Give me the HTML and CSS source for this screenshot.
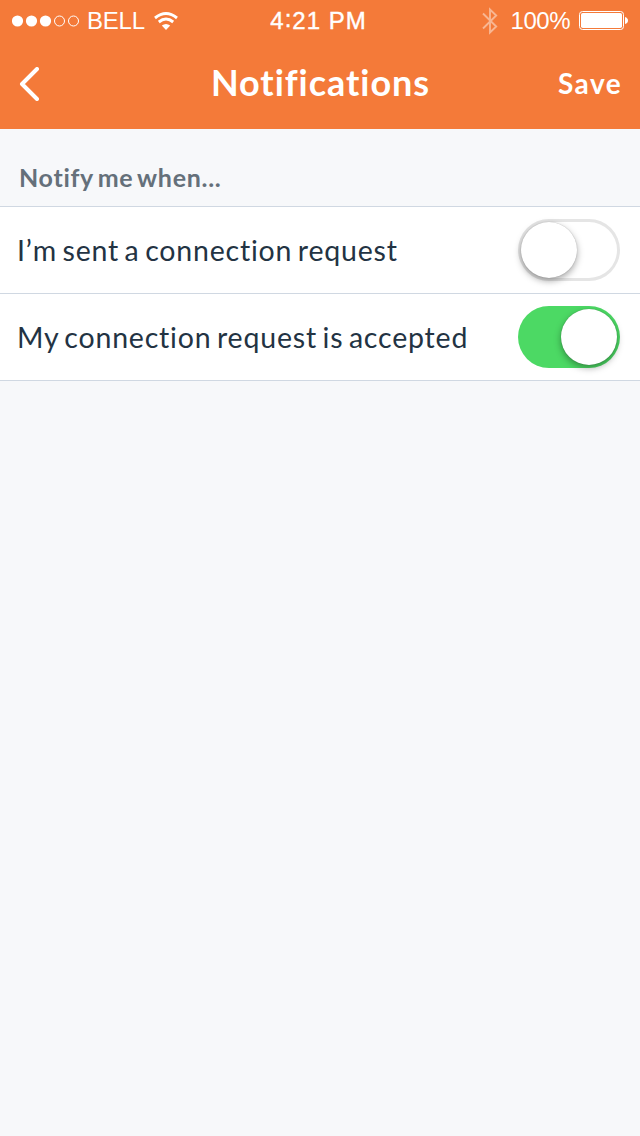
FILE: index.html
```html
<!DOCTYPE html>
<html lang="en">
<head>
<meta charset="utf-8">
<title>Notifications</title>
<link rel="stylesheet" href="styles.css">
</head>
<body>
<header class="header">
  <div class="status">
    <div class="status-left">
      <svg class="signal" width="68" height="12" viewBox="0 0 68 12"><g fill="#fff"><circle cx="5.5" cy="6" r="5.6"/><circle cx="19.5" cy="6" r="5.6"/><circle cx="33.5" cy="6" r="5.6"/></g><g fill="none" stroke="#fff"><circle cx="47.5" cy="6" r="5"/><circle cx="61.5" cy="6" r="5"/></g></svg>
      <span class="carrier">BELL</span>
      <svg class="wifi" width="24" height="18" viewBox="0 0 24 18"><g fill="none" stroke="#fff" stroke-width="2.9"><path d="M1 6Q12-2.8 23 6"/><path d="M4.8 10Q12 4.2 19.2 10"/></g><path d="M12 18L7.8 13.6Q12 10.2 16.2 13.6Z" fill="#fff"/></svg>
    </div>
    <span class="clock">4<span class="colon">:</span>21 PM</span>
    <div class="status-right">
      <svg class="bluetooth" width="16" height="28" viewBox="0 0 16 28"><path d="M1 6.5L14.2 19.5L8 25.5V2.5L14.2 8.5L1 21.5" fill="none" stroke="#fff" stroke-width="1.9"/></svg>
      <span class="percent">100%</span>
      <svg class="battery" width="49" height="19" viewBox="0 0 49 19"><rect x=".5" y=".5" width="44" height="18" rx="3" fill="none" stroke="#fff"/><rect x="2" y="2" width="41" height="15" rx="1.8" fill="#fff"/><path d="M46 6Q49 7 49 9.5T46 13Z" fill="#fff"/></svg>
    </div>
  </div>
  <nav class="navbar">
    <svg class="back" width="20" height="34" viewBox="0 0 20 34"><path d="M18 2L3 17L18 32" fill="none" stroke="#fff" stroke-width="4" stroke-linecap="round" stroke-linejoin="round"/></svg>
    <h1 class="title">Notifications</h1>
    <span class="save">Save</span>
  </nav>
</header>
<main>
  <h2 class="section">Notify me when...</h2>
  <div class="row"><span class="label label-sent">I’m sent a connection request</span><span class="toggle"><span class="knob"></span></span></div>
  <div class="row"><span class="label label-accepted">My connection request is accepted</span><span class="toggle on"><span class="knob"></span></span></div>
</main>
</body>
</html>
```
FILE: styles.css
```css
* { box-sizing: border-box; }
body { margin: 0; height: 1136px; background: #f7f8fa; color: #233343; font-family: Lato, sans-serif; font-variant-ligatures: none; overflow: hidden; }
svg { display: block; flex: none; }
span, h1, h2 { white-space: nowrap; }
.header { height: 129px; background: #f47a39; color: #fff; }
.status { display: grid; grid-template-columns: 1fr auto 1fr; align-items: center; height: 41px; padding: 0 12px; font: 24px/40px "Liberation Sans", sans-serif; font-variant-ligatures: none; }
.status-left, .status-right { display: flex; align-items: center; }
.status-right { justify-content: flex-end; }
.carrier { margin-left: 7px; letter-spacing: -.2px; }
.wifi { margin-left: 9px; }
.bluetooth { margin-right: 13px; opacity: .45; }
.percent { margin-right: 9px; letter-spacing: -.5px; }
.clock { padding-right: 3px; letter-spacing: 1px; -webkit-text-stroke: .4px #fff; }
.colon { vertical-align: 2px; line-height: 1; }
.navbar { display: grid; grid-template-columns: 1fr auto 1fr; align-items: center; height: 84px; padding: 0 18px 0 19px; }
.title { margin: -2px 0 0; font-size: 36px; line-height: 84px; font-weight: 700; letter-spacing: .95px; }
.save { justify-self: end; font-size: 28px; font-weight: 700; letter-spacing: 1.4px; }
.back { margin-top: 2px; }
.section { margin: 0; height: 78px; padding: 29px 19px 0; border-bottom: 1px solid #d0d8e2; color: #65707a; font-size: 25px; line-height: 38px; font-weight: 700; letter-spacing: .7px; word-spacing: -2.5px; }
.row { display: flex; align-items: center; justify-content: space-between; height: 87px; padding: 0 20px 0 17px; border-bottom: 1px solid #d0d8e2; background: #fff; }
.label { font-size: 28.5px; letter-spacing: .8px; word-spacing: -2.5px; }
.toggle { display: flex; width: 102px; height: 62px; padding: 3px; border-radius: 31px; box-shadow: inset 0 0 0 3px #e5e5e5; }
.knob { width: 56px; height: 56px; border-radius: 50%; background: #fff; box-shadow: 0 3px 7px rgba(0,0,0,.35), 0 0 1px rgba(0,0,0,.3); }
.on { justify-content: flex-end; background: #4cd964; box-shadow: none; }
```
